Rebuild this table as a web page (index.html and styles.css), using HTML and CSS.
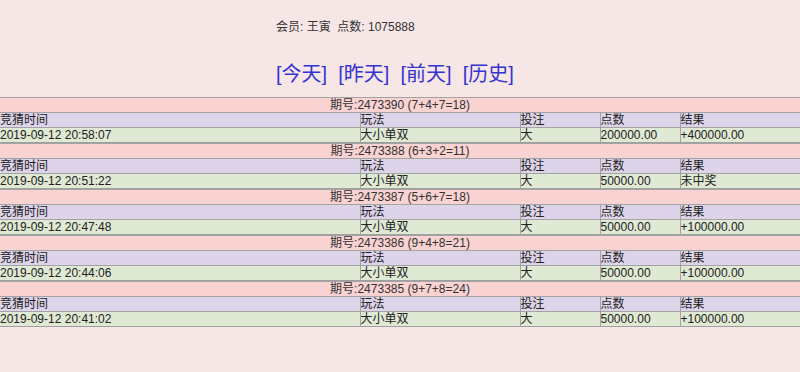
FILE: index.html
```html
<!DOCTYPE html>
<html lang="zh">
<head>
<meta charset="utf-8">
<title>竞猜记录</title>
<link rel="stylesheet" href="styles.css">
</head>
<body>
<div class="top">
  <div class="member">会员: 王寅&nbsp;&nbsp;点数: 1075888</div>
  <div class="days"><a href="#">[今天]</a>&nbsp; <a href="#">[昨天]</a>&nbsp; <a href="#">[前天]</a>&nbsp; <a href="#">[历史]</a></div>
</div>

<table class="rec">
  <colgroup><col class="c1"><col class="c2"><col class="c3"><col class="c4"><col class="c5"></colgroup>
  <tr class="issue"><td colspan="5">期号:2473390 (7+4+7=18)</td></tr>
  <tr class="head"><td>竞猜时间</td><td>玩法</td><td>投注</td><td>点数</td><td>结果</td></tr>
  <tr class="data"><td>2019-09-12 20:58:07</td><td>大小单双</td><td>大</td><td>200000.00</td><td>+400000.00</td></tr>
</table>
<table class="rec">
  <colgroup><col class="c1"><col class="c2"><col class="c3"><col class="c4"><col class="c5"></colgroup>
  <tr class="issue"><td colspan="5">期号:2473388 (6+3+2=11)</td></tr>
  <tr class="head"><td>竞猜时间</td><td>玩法</td><td>投注</td><td>点数</td><td>结果</td></tr>
  <tr class="data"><td>2019-09-12 20:51:22</td><td>大小单双</td><td>大</td><td>50000.00</td><td>未中奖</td></tr>
</table>
<table class="rec">
  <colgroup><col class="c1"><col class="c2"><col class="c3"><col class="c4"><col class="c5"></colgroup>
  <tr class="issue"><td colspan="5">期号:2473387 (5+6+7=18)</td></tr>
  <tr class="head"><td>竞猜时间</td><td>玩法</td><td>投注</td><td>点数</td><td>结果</td></tr>
  <tr class="data"><td>2019-09-12 20:47:48</td><td>大小单双</td><td>大</td><td>50000.00</td><td>+100000.00</td></tr>
</table>
<table class="rec">
  <colgroup><col class="c1"><col class="c2"><col class="c3"><col class="c4"><col class="c5"></colgroup>
  <tr class="issue"><td colspan="5">期号:2473386 (9+4+8=21)</td></tr>
  <tr class="head"><td>竞猜时间</td><td>玩法</td><td>投注</td><td>点数</td><td>结果</td></tr>
  <tr class="data"><td>2019-09-12 20:44:06</td><td>大小单双</td><td>大</td><td>50000.00</td><td>+100000.00</td></tr>
</table>
<table class="rec">
  <colgroup><col class="c1"><col class="c2"><col class="c3"><col class="c4"><col class="c5"></colgroup>
  <tr class="issue"><td colspan="5">期号:2473385 (9+7+8=24)</td></tr>
  <tr class="head"><td>竞猜时间</td><td>玩法</td><td>投注</td><td>点数</td><td>结果</td></tr>
  <tr class="data"><td>2019-09-12 20:41:02</td><td>大小单双</td><td>大</td><td>50000.00</td><td>+100000.00</td></tr>
</table>
</body>
</html>
```

FILE: styles.css
```css
html, body {
  margin: 0;
  padding: 0;
  background: #f6e6e6;
  font-family: "Liberation Sans", Arial, "Noto Sans CJK SC", sans-serif;
  color: #222;
}

.top {
  width: 248px;
  margin: 0 auto;
  padding-top: 20px;
  height: 97px;
  box-sizing: border-box;
}

.member {
  font-size: 12px;
  line-height: 14px;
  color: #333;
  white-space: nowrap;
}

.days {
  margin-top: 29px;
  font-size: 20px;
  line-height: 22px;
  white-space: nowrap;
}

.days a {
  color: #3434d0;
  text-decoration: none;
}

.rec {
  width: 100%;
  table-layout: fixed;
  border-collapse: collapse;
  font-size: 12px;
  line-height: 14px;
  border-top: 1px solid #9f9f9f;
  border-bottom: 1px solid #9f9f9f;
}

.c1 { width: 45%; }
.c2 { width: 20%; }
.c3 { width: 10%; }
.c4 { width: 10%; }
.c5 { width: 15%; }

.rec td {
  padding: 0;
  height: 14px;
  white-space: nowrap;
  overflow: hidden;
  border-top: 1px solid #a3a3a3;
  border-left: 1px solid #a3a3a3;
  color: #222;
}

.rec td:first-child {
  border-left: none;
}

.issue td {
  background: #f9d2d2;
  text-align: center;
  color: #333;
}

.head td {
  background: #ddd4ea;
}

.data td {
  background: #dfe9d4;
}
```
